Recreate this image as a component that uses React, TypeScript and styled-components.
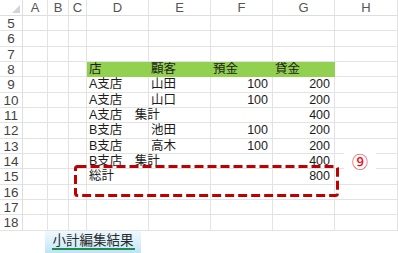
import React from 'react';
import styled, { createGlobalStyle } from 'styled-components';

const GlobalStyle = createGlobalStyle`
  html, body {
    margin: 0;
    padding: 0;
    background: #ffffff;
  }
  body {
    font-family: "Liberation Sans", "Noto Sans CJK JP", sans-serif;
  }
`;

const Page = styled.div`
  width: 398px;
  height: 253px;
  overflow: hidden;
  display: flex;
  flex-direction: column;
`;

const SheetArea = styled.div`
  position: relative;
`;

const Grid = styled.div`
  display: grid;
  grid-template-columns: 23px 25px 21px 18px 62px 62px 62px 62px 1fr;
  grid-template-rows: 16px repeat(14, 15.357px);
`;

const Corner = styled.div`
  box-sizing: border-box;
  border-right: 1px solid #dedede;
  border-bottom: 1px solid #dedede;
  display: flex;
  align-items: flex-end;
  justify-content: flex-end;
  padding: 0 2px 2px 0;
`;

const ColHead = styled.div`
  box-sizing: border-box;
  border-right: 1px solid #e3e3e3;
  border-bottom: 1px solid #dedede;
  color: #555;
  font-size: 13px;
  line-height: 16px;
  text-align: center;
`;

const RowHead = styled.div`
  box-sizing: border-box;
  border-right: 1px solid #dedede;
  border-bottom: 1px solid #e3e3e3;
  color: #444;
  font-size: 13.5px;
  line-height: 15px;
  text-align: center;
`;

const Cell = styled.div<{ $fill?: string; $num?: boolean }>`
  box-sizing: border-box;
  border-right: 1px solid ${(p) => p.$fill ?? '#e3e3e3'};
  border-bottom: 1px solid ${(p) => p.$fill ?? '#e3e3e3'};
  background: ${(p) => p.$fill ?? 'transparent'};
  color: #1c1c1c;
  font-size: 12.5px;
  line-height: 15px;
  white-space: nowrap;
  overflow: visible;
  text-align: ${(p) => (p.$num ? 'right' : 'left')};
  padding: ${(p) => (p.$num ? '0 4px 0 0' : '0 0 0 2px')};
`;

const DashedFrame = styled.svg`
  position: absolute;
  left: 74px;
  top: 165px;
  overflow: visible;
`;

const Badge = styled.div`
  position: absolute;
  left: 344px;
  top: 151px;
  width: 32px;
  height: 19px;
  background: #ffffff;
  display: flex;
  align-items: center;
  justify-content: center;
  color: #e8121a;
  font-family: "Noto Sans CJK JP", sans-serif;
  font-size: 16px;
  font-weight: 500;
`;

const TabBar = styled.div`
  flex: 1;
  display: flex;
  align-items: flex-start;
  padding-left: 45px;
`;

const SheetTab = styled.div`
  width: 96px;
  height: 24px;
  box-sizing: border-box;
  border-bottom-left-radius: 4px;
  border-bottom-right-radius: 4px;
  background: linear-gradient(to bottom, #eef8fd 0%, #d6eefa 55%, #b9e0f4 100%);
  display: flex;
  justify-content: center;
  padding-top: 1px;
`;

const TabLabel = styled.span`
  font-family: "Noto Sans CJK JP", sans-serif;
  font-size: 13.5px;
  line-height: 15px;
  color: #2b2b2b;
  border-bottom: 2px solid #1f8c4c;
  padding: 0 1px 0;
  height: 16px;
`;

const GREEN = '#92d050';

type Row = { n: number; cells: { text?: string; num?: boolean; fill?: string }[] };

const empty = () => Array.from({ length: 8 }, () => ({}));

const rows: Row[] = [
  { n: 5, cells: empty() },
  { n: 6, cells: empty() },
  { n: 7, cells: empty() },
  {
    n: 8,
    cells: [{}, {}, {}, { text: '店', fill: GREEN }, { text: '顧客', fill: GREEN }, { text: '預金', fill: GREEN }, { text: '貸金', fill: GREEN }, {}],
  },
  { n: 9, cells: [{}, {}, {}, { text: 'A支店' }, { text: '山田' }, { text: '100', num: true }, { text: '200', num: true }, {}] },
  { n: 10, cells: [{}, {}, {}, { text: 'A支店' }, { text: '山口' }, { text: '100', num: true }, { text: '200', num: true }, {}] },
  { n: 11, cells: [{}, {}, {}, { text: 'A支店　集計' }, {}, {}, { text: '400', num: true }, {}] },
  { n: 12, cells: [{}, {}, {}, { text: 'B支店' }, { text: '池田' }, { text: '100', num: true }, { text: '200', num: true }, {}] },
  { n: 13, cells: [{}, {}, {}, { text: 'B支店' }, { text: '高木' }, { text: '100', num: true }, { text: '200', num: true }, {}] },
  { n: 14, cells: [{}, {}, {}, { text: 'B支店　集計' }, {}, {}, { text: '400', num: true }, {}] },
  { n: 15, cells: [{}, {}, {}, { text: '総計' }, {}, {}, { text: '800', num: true }, {}] },
  { n: 16, cells: empty() },
  { n: 17, cells: empty() },
  { n: 18, cells: empty() },
];

const columns = ['A', 'B', 'C', 'D', 'E', 'F', 'G', 'H'];

export default function App() {
  return (
    <Page>
      <GlobalStyle />
      <SheetArea>
        <Grid>
          <Corner>
            <svg width="8" height="8" viewBox="0 0 8 8">
              <polygon points="8,0 8,8 0,8" fill="#d4d4d4" />
            </svg>
          </Corner>
          {columns.map((c) => (
            <ColHead key={c}>{c}</ColHead>
          ))}
          {rows.map((r) => (
            <React.Fragment key={r.n}>
              <RowHead>{r.n}</RowHead>
              {r.cells.map((c, i) => (
                <Cell key={i} $fill={c.fill} $num={c.num}>
                  {c.text}
                </Cell>
              ))}
            </React.Fragment>
          ))}
        </Grid>
        <DashedFrame width="265" height="32" viewBox="0 0 265 32">
          <rect
            x="1.5"
            y="1.5"
            width="262"
            height="29"
            rx="2"
            fill="none"
            stroke="#c00000"
            strokeWidth="3"
            strokeDasharray="9 4"
          />
        </DashedFrame>
        <Badge>⑨</Badge>
      </SheetArea>
      <TabBar>
        <SheetTab>
          <TabLabel>小計編集結果</TabLabel>
        </SheetTab>
      </TabBar>
    </Page>
  );
}
